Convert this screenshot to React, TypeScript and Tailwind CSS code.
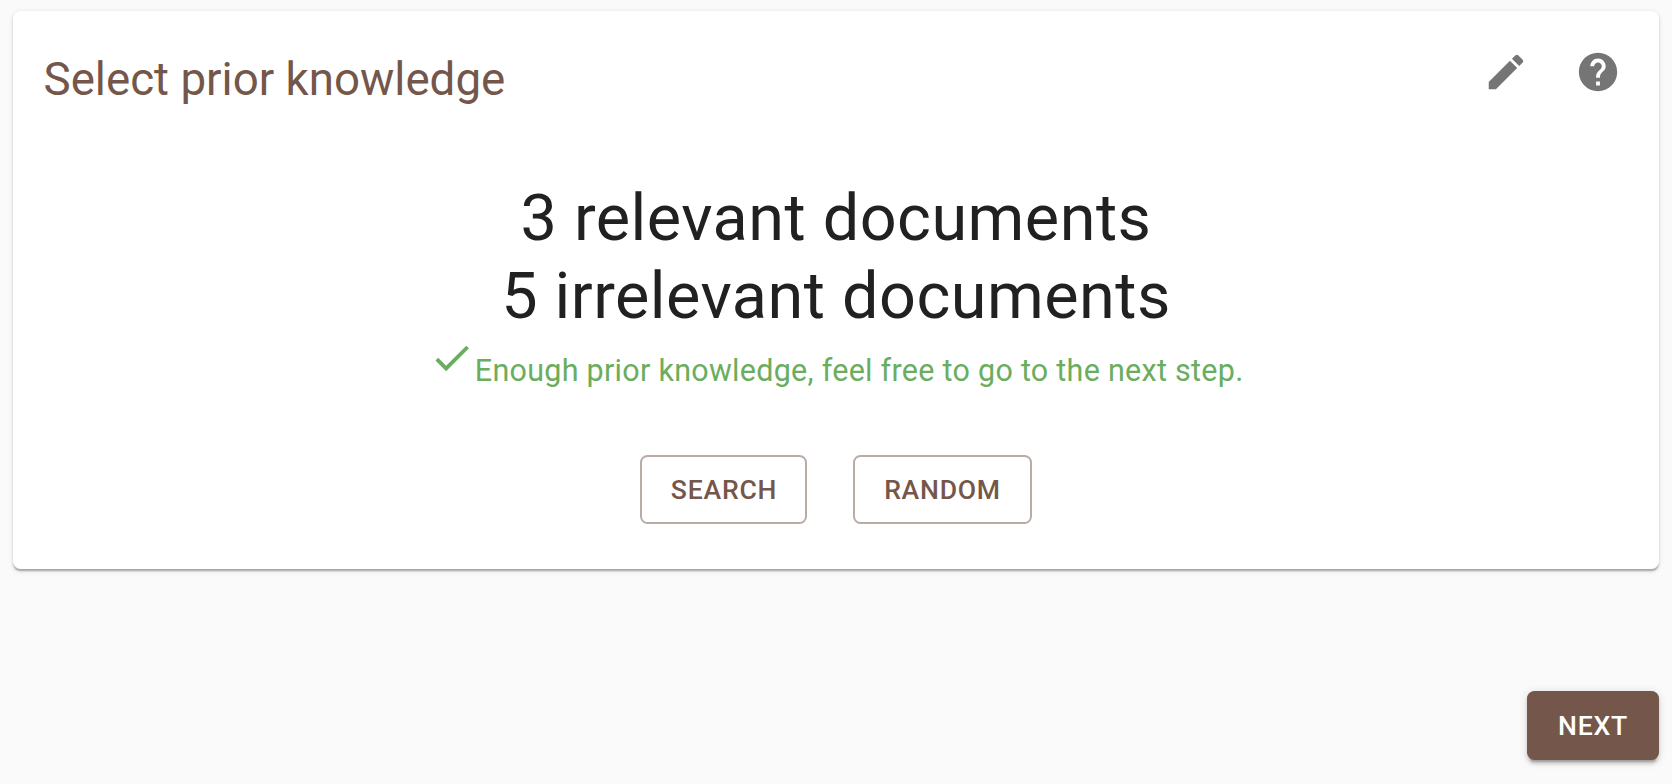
import React from "react";

const EDIT =
  "M3 17.25V21h3.75L17.81 9.94l-3.75-3.75L3 17.25zM20.71 7.04c.39-.39.39-1.02 0-1.41l-2.34-2.34c-.39-.39-1.02-.39-1.41 0l-1.83 1.83 3.75 3.75 1.83-1.83z";
const HELP =
  "M12 2C6.48 2 2 6.48 2 12s4.48 10 10 10 10-4.48 10-10S17.52 2 12 2zm1 17h-2v-2h2v2zm2.07-7.75l-.9.92C13.45 12.9 13 13.5 13 15h-2v-.5c0-1.1.45-2.1 1.17-2.83l1.24-1.26c.37-.36.59-.86.59-1.41 0-1.1-.9-2-2-2s-2 .9-2 2H8c0-2.21 1.79-4 4-4s4 1.79 4 4c0 .88-.36 1.68-.93 2.25z";
const CHECK = "M9 16.17L4.83 12l-1.42 1.41L9 19 21 7l-1.41-1.41z";

function Icon({ d, className }: { d: string; className: string }) {
  return (
    <svg viewBox="0 0 24 24" fill="currentColor" className={className} aria-hidden="true">
      <path d={d} />
    </svg>
  );
}

function OutlinedButton({ label, className }: { label: string; className: string }) {
  return (
    <button
      className={`h-[69px] rounded-[7.5px] border-2 border-[#baaba5] text-center text-[26.6px] font-medium tracking-[0.02857em] text-[#75564a] ${className}`}
    >
      {label}
    </button>
  );
}

export default function App() {
  return (
    <div className="flex h-[784px] w-[1672px] flex-col overflow-hidden bg-[#fafafa] pt-[11px] pr-[13px] pl-[13px] font-['Roboto',sans-serif]">
      <section className="h-[558px] rounded-[7.5px] bg-white shadow-[0_3.7px_1.9px_-1.9px_rgba(0,0,0,0.18),0_1.9px_1.9px_0_rgba(0,0,0,0.12),0_1.9px_5.6px_0_rgba(0,0,0,0.12)]">
        <header className="flex h-[168px] justify-between pl-[30.5px] pr-[38px]">
          <h1 className="mt-[38.5px] text-[45.7px] leading-[60px] text-[#75564a]">Select prior knowledge</h1>
          <div className="mt-[38px] flex gap-[46px] text-[#757575]">
            <button aria-label="Edit" className="h-[46px]">
              <Icon d={EDIT} className="size-[46px]" />
            </button>
            <button aria-label="Help" className="h-[46px]">
              <Icon d={HELP} className="size-[46px]" />
            </button>
          </div>
        </header>
        <div className="text-center text-[64.75px] leading-[78px] tracking-[0.00735em] text-[#212121]">
          <p>3 relevant documents</p>
          <p>5 irrelevant documents</p>
        </div>
        <div className="flex h-[109px] justify-center text-[#6aad5e]">
          <Icon d={CHECK} className="mr-[0.6px] size-[45.7px] shrink-0" />
          <p className="mt-[13px] text-[30.47px] leading-[45px] tracking-[0.00938em]">
            Enough prior knowledge, feel free to go to the next step.
          </p>
        </div>
        <div className="mt-[11px] flex justify-center gap-[46px]">
          <OutlinedButton label="SEARCH" className="w-[167px] pl-[1px]" />
          <OutlinedButton label="RANDOM" className="w-[179px]" />
        </div>
      </section>
      <div className="mt-[122px] flex justify-end">
        <button className="h-[69px] w-[132px] rounded-[7.5px] bg-[#75564a] text-center text-[26.6px] font-medium tracking-[0.02857em] text-white shadow-[0_5.6px_1.9px_-3.7px_rgba(0,0,0,0.2),0_3.7px_3.7px_0_rgba(0,0,0,0.14),0_1.9px_9.3px_0_rgba(0,0,0,0.12)]">
          NEXT
        </button>
      </div>
    </div>
  );
}
